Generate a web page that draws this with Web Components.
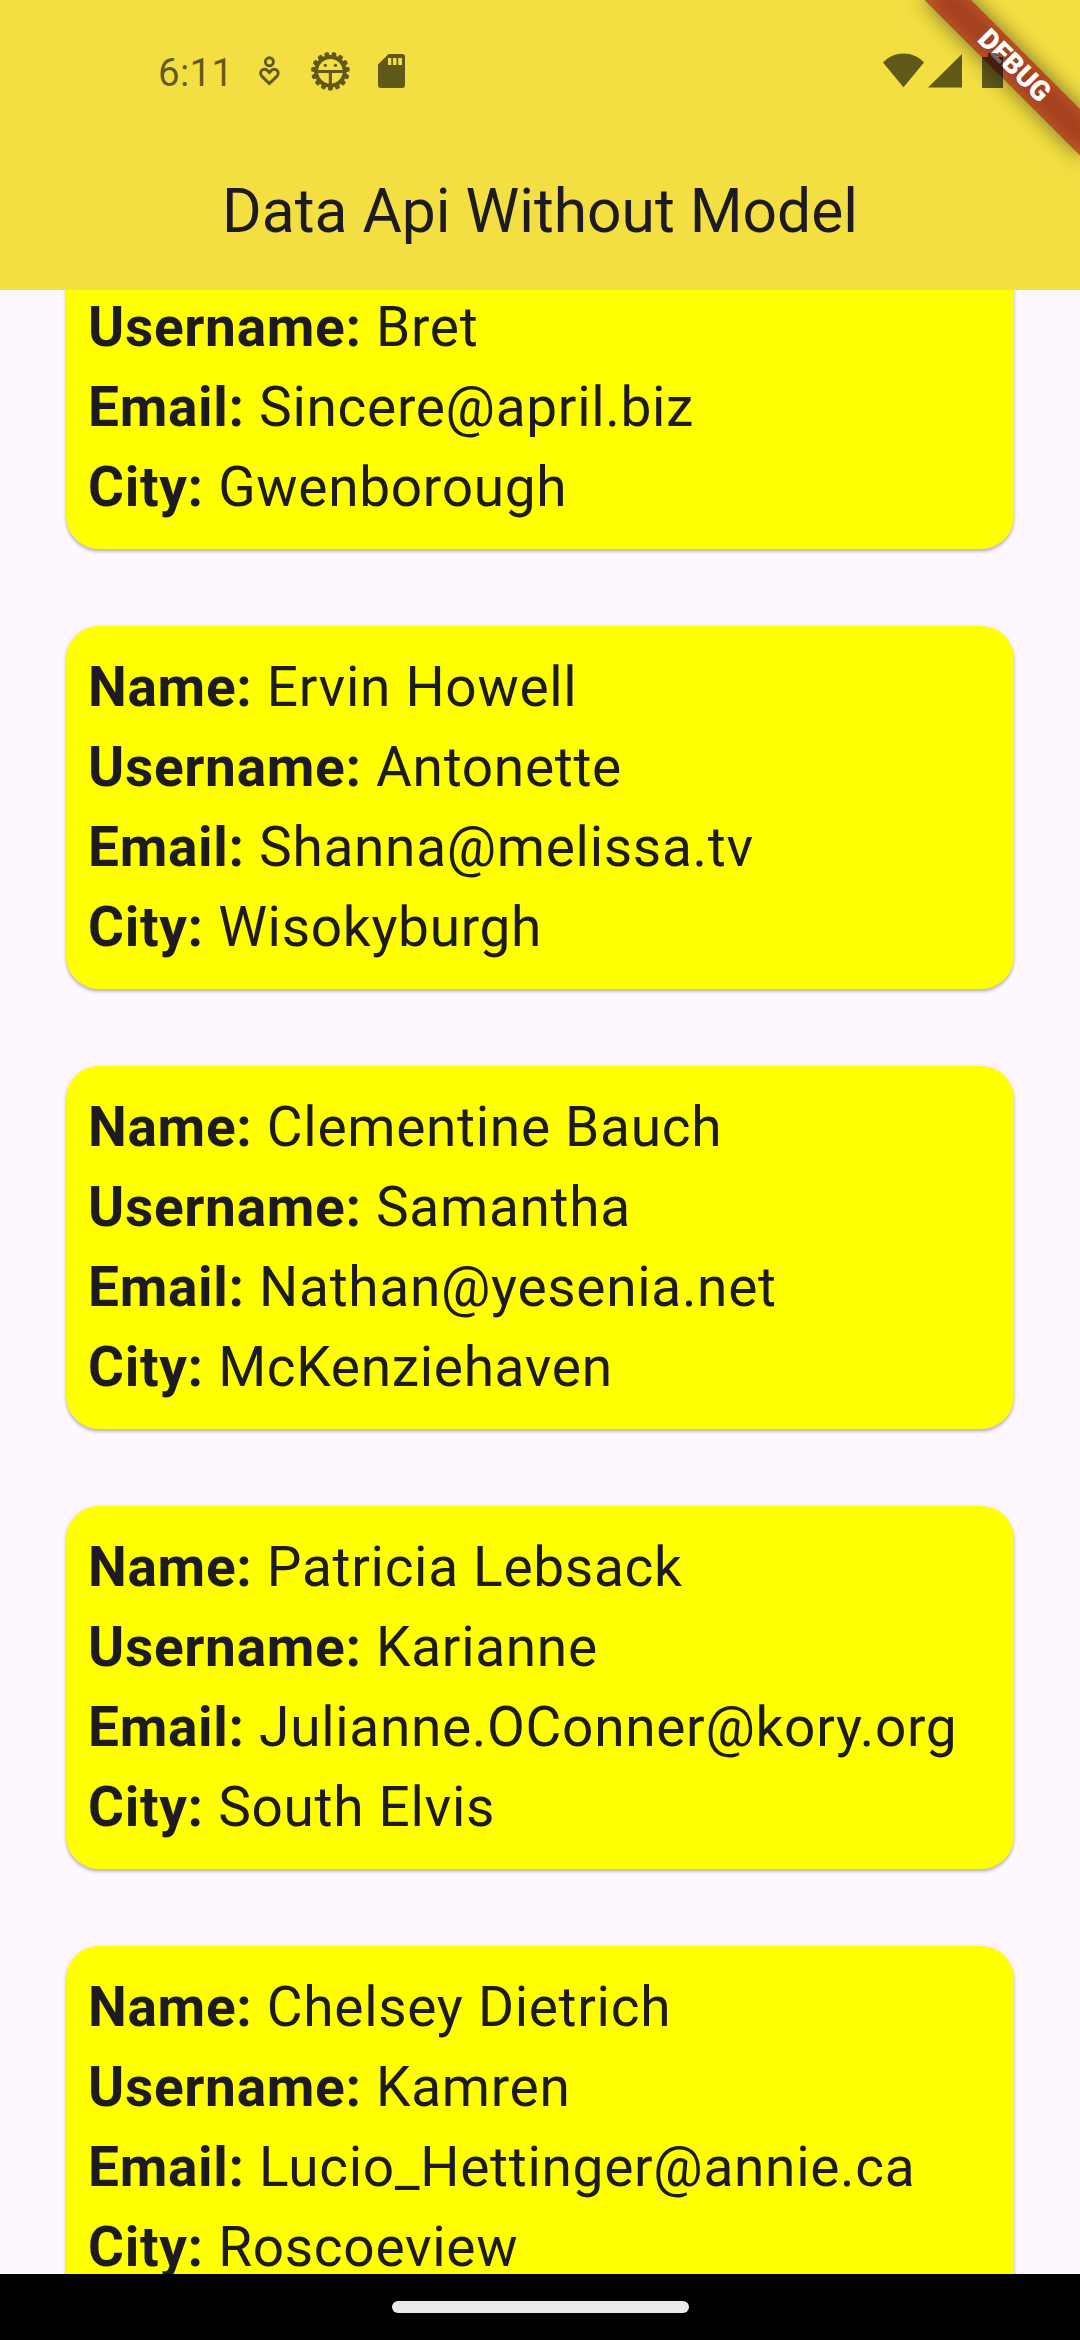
<!DOCTYPE html>
<html lang="en">
<head>
<meta charset="utf-8">
<title>Data Api Without Model</title>
<style>
html, body { margin: 0; padding: 0; }
body { width: 1080px; height: 2340px; overflow: hidden; background: #fef7ff; font-family: Roboto, "Liberation Sans", sans-serif; color: #1d1b20; }
</style>
</head>
<body>
<phone-screen>
  <status-bar slot="status" time="6:11"></status-bar>
  <app-bar slot="header">Data Api Without Model</app-bar>
  <user-card scrolled username="Bret" email="Sincere@april.biz" city="Gwenborough"></user-card>
  <user-card name="Ervin Howell" username="Antonette" email="Shanna@melissa.tv" city="Wisokyburgh"></user-card>
  <user-card name="Clementine Bauch" username="Samantha" email="Nathan@yesenia.net" city="McKenziehaven"></user-card>
  <user-card name="Patricia Lebsack" username="Karianne" email="Julianne.OConner@kory.org" city="South Elvis"></user-card>
  <user-card name="Chelsey Dietrich" username="Kamren" email="Lucio_Hettinger@annie.ca" city="Roscoeview"></user-card>
  <debug-banner slot="banner">DEBUG</debug-banner>
  <nav-pill slot="nav"></nav-pill>
</phone-screen>
<script>
const define = (name, html, setup) => customElements.define(name, class extends HTMLElement {
  connectedCallback() {
    if (this.shadowRoot) return;
    this.attachShadow({ mode: "open" }).innerHTML = html;
    if (setup) setup(this, this.shadowRoot);
  }
});

define("phone-screen", `
<style>
:host { display: flex; flex-direction: column; position: relative; isolation: isolate; width: 1080px; height: 2340px; overflow: hidden; }
header { flex: none; height: 290px; background: #f3df42; display: flex; flex-direction: column; }
main { flex: 1; min-height: 0; overflow: hidden; display: flex; flex-direction: column; justify-content: flex-start; }
.list { display: flex; flex-direction: column; gap: 77px; padding: 0 66px; margin-top: -24px; }
</style>
<header><slot name="status"></slot><slot name="header"></slot></header>
<main><div class="list"><slot></slot></div></main>
<slot name="nav"></slot>
<slot name="banner"></slot>`);

// The status icons are painted above the app and its banner.
define("status-bar", `
<style>
:host { display: flex; align-items: center; justify-content: space-between; height: 136px; padding: 6px 76px 0 158px; box-sizing: border-box; position: relative; z-index: 3; color: rgba(0,0,0,.6); }
.side { display: flex; align-items: center; }
.time { font-size: 38.5px; line-height: 44px; padding-top: 4px; width: 92px; letter-spacing: .3px; }
svg { display: block; fill: currentColor; }
</style>
<div class="side">
  <span class="time"></span>
  <svg width="165" height="50" viewBox="250 46 165 50">
    <g fill="none" stroke="currentColor" stroke-width="2.9">
      <circle cx="269.4" cy="61.8" r="4"/>
      <path d="M269.4 83.6L262 76.4C258 72 263.6 66.4 267.8 70.8L269.4 72.6L271 70.8C275.2 66.4 280.8 72 276.8 76.4Z"/>
    </g>
    <g class="gear"></g>
    <path fill-rule="evenodd" d="M388.5 54H402Q405 54 405 57V85Q405 88 402 88H381Q378 88 378 85V64.5ZM388 58V65H391.3V58ZM393 58V65H396.5V58ZM398.2 58V65H402V58Z"/>
  </svg>
</div>
<svg width="122" height="36" viewBox="882 53 122 36">
  <path d="M883 62.5C894 50.5 913 50.5 924 62.5L903.5 87.3Z"/>
  <path d="M962 54V87.6H928Z"/>
  <path d="M988 53H997V57H1003V88H982V57H988Z"/>
</svg>`, (host, root) => {
  root.querySelector(".time").textContent = host.getAttribute("time");
  const n = 15, cx = 330.4, cy = 71.3, teeth = [];
  for (let i = 0; i < n; i++) {
    const a = (i * 360 / n) + 180;
    teeth.push(`<rect x="${cx - 2.4}" y="${cy - 19.3}" width="4.8" height="6" rx="1.6" transform="rotate(${a} ${cx} ${cy})"/>`);
  }
  root.querySelector(".gear").innerHTML = `<mask id="m"><g fill="#fff">${teeth.join("")}<circle cx="${cx}" cy="${cy}" r="16.3"/></g>
    <circle cx="${cx}" cy="${cy}" r="12.3" fill="#000"/>
    <g fill="#fff"><rect x="317" y="70" width="27" height="3"/><rect x="328.8" y="71" width="3.2" height="14"/><circle cx="325.3" cy="65.3" r="1.6"/><circle cx="335.5" cy="65.3" r="1.6"/></g></mask>
    <rect x="308" y="48" width="45" height="46" mask="url(#m)"/>`;
});

define("app-bar", `
<style>
:host { display: flex; flex: 1; align-items: center; justify-content: center; font-size: 60.5px; line-height: 78px; padding-bottom: 2px; }
</style><slot></slot>`);

define("user-card", `
<style>
:host { display: block; flex: none; box-sizing: border-box; height: 363px; padding: 21px 22px; border-radius: 33px; background: #ff0; box-shadow: 0 3px 3px rgba(0,0,0,.18), 0 1px 4px rgba(0,0,0,.14); font-size: 55px; line-height: 80px; letter-spacing: .69px; }
:host([scrolled]) { height: 283px; border-radius: 0 0 33px 33px; }
div { white-space: nowrap; height: 80px; }
b { font-weight: 700; }
</style><section></section>`, (host, root) => {
  const box = root.querySelector("section");
  for (const label of ["Name", "Username", "Email", "City"]) {
    const value = host.getAttribute(label.toLowerCase());
    if (value === null) continue;
    const row = document.createElement("div"), b = document.createElement("b");
    b.textContent = label + ":";
    row.append(b, " " + value);
    box.append(row);
  }
});

define("debug-banner", `
<style>
:host { display: block; position: absolute; top: 0; right: 0; width: 300px; height: 290px; overflow: hidden; z-index: 2; }
.pivot { position: absolute; left: 300px; top: 0; width: 0; height: 0; transform-origin: 0 0; transform: rotate(45deg); }
.shade, .band { position: absolute; left: -110px; top: 77px; width: 220px; height: 33px; }
.shade { background: rgba(0,0,0,.5); filter: blur(11px); }
.band { background: rgba(183,28,28,.627); color: #fff; font-size: 28px; font-weight: 900; line-height: 31px; text-align: center; }
</style>
<div class="pivot"><div class="shade"></div><div class="band"><slot></slot></div></div>`);

define("nav-pill", `
<style>
:host { display: flex; flex: none; height: 66px; background: #000; align-items: center; justify-content: center; }
i { width: 297px; height: 11.5px; border-radius: 6px; background: #eaeaea; }
</style><i></i>`);
</script>
</body>
</html>
